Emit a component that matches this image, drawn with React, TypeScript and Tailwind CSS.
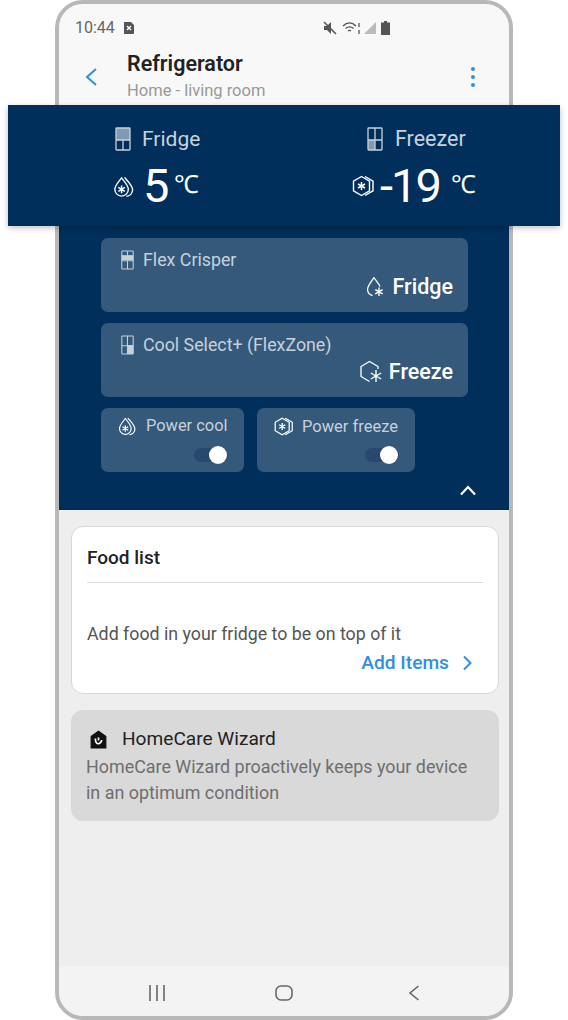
import { FC } from 'react';

const FONT = "font-['Roboto',sans-serif]";

type FridgeIconProps = {
  variant: 'top' | 'bottomRight' | 'topBand' | 'midRight';
  className?: string;
}

const FridgeIcon: FC<FridgeIconProps> = ({ variant, className }) => (
  <svg viewBox="0 0 16 24" className={className} fill="none" stroke="currentColor" strokeWidth="1.3">
    {variant === 'top' && <rect x="1" y="1" width="14" height="12" fill="currentColor" stroke="none" opacity="0.65" />}
    {variant === 'topBand' && <rect x="1" y="6" width="14" height="6" fill="currentColor" stroke="none" />}
    {variant === 'bottomRight' && <rect x="1" y="13" width="7" height="10" fill="currentColor" stroke="none" opacity="0.65" />}
    {variant === 'midRight' && <rect x="8" y="12" width="7" height="11" fill="currentColor" stroke="none" />}
    <rect x="1" y="1" width="14" height="22" rx="0.8" />
    {variant === 'top' || variant === 'topBand' ? (
      <path d="M1 13h14M8 13v10" />
    ) : (
      <path d="M8 1v22M1 13h14" />
    )}
    {variant === 'topBand' && <path d="M8 1v5" />}
  </svg>
);

const Drops: FC<{ className?: string }> = ({ className }) => (
  <svg viewBox="0 0 24 24" className={className} fill="none" stroke="currentColor" strokeWidth="1.4">
    <path d="M10 3c3 4 7 8 7 12a7 7 0 0 1-14 0c0-4 4-8 7-12z" />
    <path d="M13 2.5c4 4.500 8.500 9 8.500 13a6.800 6.800 0 0 1-6.500 6.800" />
    <path d="M10 11v8M6.600 13l6.800 4M13.400 13l-6.800 4" strokeWidth="1.5" />
  </svg>
);

const Hexes: FC<{ className?: string }> = ({ className }) => (
  <svg viewBox="0 0 24 24" className={className} fill="none" stroke="currentColor" strokeWidth="1.4">
    <path d="M10.500 2.500l8 4.700v9.600l-8 4.700-8-4.700V7.200z" />
    <path d="M14 2.500l8 4.700v9.600l-8 4.700" />
    <path d="M10.500 8v8M7 10l7 4M14 10l-7 4" strokeWidth="1.5" />
  </svg>
);

const DropSnow: FC<{ className?: string }> = ({ className }) => (
  <svg viewBox="0 0 20 22" className={className} fill="none" stroke="currentColor" strokeWidth="1.3">
    <path d="M9 1.500C11 5 14 7.500 15 10.500M7.500 19.500A6.500 6.500 0 0 1 2.500 13.500C2.500 9.500 6.500 5.500 9 1.500" />
    <path d="M14 11.500v8.500M10.300 13.700l7.400 4.200M17.700 13.700l-7.400 4.200" strokeWidth="1.4" />
  </svg>
);

const HexSnow: FC<{ className?: string }> = ({ className }) => (
  <svg viewBox="0 0 24 24" className={className} fill="none" stroke="currentColor" strokeWidth="1.3">
    <path d="M19 9V6.500L10.500 1.500 2 6.500v10l8.500 5" />
    <path d="M17 10v12M11.800 13l10.400 6M22.200 13l-10.400 6" strokeWidth="1.4" />
  </svg>
);

const Toggle: FC = () => (
  <div className="relative h-[14px] w-[34px] rounded-full bg-[#29486e]">
    <span className="absolute -top-[2px] right-[1px] h-[18px] w-[18px] rounded-full bg-white" />
  </div>
);

const App: FC = () => {
  return (
    <div className={`${FONT} relative h-[1020px] w-[568px] overflow-hidden bg-white`}>
      <div className="ml-[55px] flex h-[1020px] w-[458px] flex-col overflow-hidden rounded-[28px] border-[4px] border-[#b8b8b8] bg-[#eeeeee]">
        <div className="h-[101px] bg-[#f8f8f8] px-[16px]">
          <div className="flex h-[40px] items-center justify-between pt-[8px]">
            <div className="flex items-center gap-[8px] text-[#666]">
              <span className="text-[16px]">10:44</span>
              <svg viewBox="0 0 12 12" className="h-[12px] w-[12px]">
                <path d="M1 0h7l3 3v8a1 1 0 0 1-1 1H1z" fill="#555" />
                <path d="M4 4l4 4M8 4l-4 4" stroke="#fff" strokeWidth="1.4" />
              </svg>
            </div>
            <div className="mr-[103px] flex items-center gap-[5px] text-[#555]">
              <svg viewBox="0 0 14 14" className="h-[14px] w-[14px]" fill="currentColor">
                <path d="M1 5h3l4-4v12l-4-4H1z" />
                <path d="M1 1l12 12" stroke="currentColor" strokeWidth="1.6" />
              </svg>
              <svg viewBox="0 0 20 14" className="h-[14px] w-[20px]" fill="none" stroke="currentColor" strokeWidth="1.3">
                <path d="M1 5c4-4 9-4 13 0M3.500 7.500c3-2.500 5-2.500 8 0M6 10c1.500-1 2-1 3 0" />
                <path d="M17 2v4M17 9v4" />
              </svg>
              <svg viewBox="0 0 12 12" className="-ml-[3px] h-[12px] w-[12px]">
                <path d="M12 0v12H0z" fill="#bbb" />
              </svg>
              <svg viewBox="0 0 9 14" className="h-[14px] w-[9px]" fill="currentColor">
                <path d="M3 0h3v1.500h3V14H0V1.500h3z" />
              </svg>
            </div>
          </div>
          <div className="mt-[8px] flex items-center">
            <svg viewBox="0 0 14 20" className="ml-[9px] h-[20px] w-[14px]" fill="none" stroke="#2f8fe0" strokeWidth="2">
              <path d="M12 2L3 10l9 8" />
            </svg>
            <div className="ml-[29px] flex-1">
              <div className="text-[21.500px] font-semibold leading-[24px] text-[#222]">Refrigerator</div>
              <div className="mt-[5px] text-[16.500px] leading-[20px] text-[#999]">Home - living room</div>
            </div>
            <div className="mr-[18px] mt-[1px] flex flex-col gap-[3.500px]">
              <span className="h-[4.500px] w-[4.500px] rounded-full bg-[#2f8fe0]" />
              <span className="h-[4.500px] w-[4.500px] rounded-full bg-[#2f8fe0]" />
              <span className="h-[4.500px] w-[4.500px] rounded-full bg-[#2f8fe0]" />
            </div>
          </div>
        </div>

        <div className="h-[405px] bg-[#002f5c] pl-[42px] pt-[133px]">
          <div className="flex h-[74px] w-[367px] flex-col justify-between rounded-[7px] bg-[#34597b] pb-[13px] pl-[20px] pr-[15px] pt-[11px]">
            <div className="flex items-center gap-[9px] text-[#c8d1da]">
              <FridgeIcon variant="topBand" className="h-[20px] w-[13px]" />
              <span className="text-[17.800px] leading-[22px]">Flex Crisper</span>
            </div>
            <div className="flex items-center justify-end gap-[8px] text-white">
              <DropSnow className="h-[22px] w-[20px]" />
              <span className="text-[21.500px] font-medium leading-[24px]">Fridge</span>
            </div>
          </div>
          <div className="mt-[11px] flex h-[74px] w-[367px] flex-col justify-between rounded-[7px] bg-[#34597b] pb-[13px] pl-[20px] pr-[15px] pt-[11px]">
            <div className="flex items-center gap-[9px] text-[#c8d1da]">
              <FridgeIcon variant="midRight" className="h-[20px] w-[13px]" />
              <span className="text-[17.800px] leading-[22px]">Cool Select+ (FlexZone)</span>
            </div>
            <div className="flex items-center justify-end gap-[6px] text-white">
              <HexSnow className="h-[24px] w-[24px]" />
              <span className="text-[21.500px] font-medium leading-[24px]">Freeze</span>
            </div>
          </div>
          <div className="mt-[11px] flex gap-[13px]">
            <div className="flex h-[64px] w-[143px] flex-col justify-between rounded-[7px] bg-[#34597b] px-[16px] pb-[10px] pt-[8px]">
              <div className="flex items-center gap-[9px] text-[#c8d1da]">
                <Drops className="h-[20px] w-[20px] text-white" />
                <span className="whitespace-nowrap text-[16.400px] leading-[20px]">Power cool</span>
              </div>
              <div className="flex justify-end"><Toggle /></div>
            </div>
            <div className="flex h-[64px] w-[158px] flex-col justify-between rounded-[7px] bg-[#34597b] pb-[10px] pl-[16px] pr-[16px] pt-[8px]">
              <div className="flex items-center gap-[8px] text-[#c8d1da]">
                <Hexes className="h-[21px] w-[21px] shrink-0 text-white" />
                <span className="whitespace-nowrap text-[16.500px] leading-[20px]">Power freeze</span>
              </div>
              <div className="flex justify-end"><Toggle /></div>
            </div>
          </div>
          <div className="mr-[32px] mt-[12px] flex justify-end">
            <svg viewBox="0 0 18 12" className="h-[12px] w-[18px]" fill="none" stroke="#fff" strokeWidth="2.200">
              <path d="M2 10.500L9 3l7 7.500" />
            </svg>
          </div>
        </div>

        <div className="flex flex-1 flex-col pl-[12px] pr-[10px] pt-[16px]">
          <div className="h-[168px] rounded-[12px] border border-[#d8d8d8] bg-white px-[15px]">
            <div className="border-b border-[#dcdcdc] pb-[14px] pt-[20px] text-[19px] font-medium leading-[21px] text-[#222]">Food list</div>
            <div className="mt-[41px] text-[17.800px] leading-[20px] text-[#555]">Add food in your fridge to be on top of it</div>
            <div className="mt-[8px] flex items-center justify-end gap-[13px] pr-[11px]">
              <span className="text-[19.200px] font-medium leading-[22px] text-[#2f8fe0]">Add Items</span>
              <svg viewBox="0 0 10 16" className="h-[16px] w-[10px]" fill="none" stroke="#2f8fe0" strokeWidth="2">
                <path d="M2 1.500L8.500 8 2 14.500" />
              </svg>
            </div>
          </div>
          <div className="mt-[16px] h-[111px] rounded-[12px] bg-[#d9d9d9] px-[15px] pt-[17px]">
            <div className="flex items-center gap-[14px]">
              <svg viewBox="0 0 18 18" className="ml-[3px] h-[19px] w-[19px]">
                <path d="M9 1l7 5v11H2V6z" fill="#111" stroke="#111" strokeWidth="1" strokeLinejoin="round" />
                <path d="M6 8c0 4 2 5 3 5s3-1.500 3-3.500M9 7v3" fill="none" stroke="#fff" strokeWidth="1.600" />
              </svg>
              <span className="text-[19.100px] leading-[24px] text-[#222]">HomeCare Wizard</span>
            </div>
            <p className="mt-[3px] pr-[10px] text-[17.900px] leading-[25.500px] text-[#6e6e6e]">
              HomeCare Wizard proactively keeps your device in an optimum condition
            </p>
          </div>
          <div className="flex-1" />
        </div>

        <div className="flex h-[50px] items-center justify-between bg-[#f3f3f3] px-[89px] pt-[4px]">
          <svg viewBox="0 0 18 16" className="h-[16px] w-[18px]" fill="none" stroke="#666" strokeWidth="1.600">
            <path d="M2 0v16M9 0v16M16 0v16" />
          </svg>
          <svg viewBox="0 0 18 16" className="-ml-[6px] h-[16px] w-[18px]" fill="none" stroke="#666" strokeWidth="1.600">
            <rect x="1" y="1" width="16" height="14" rx="5" />
          </svg>
          <svg viewBox="0 0 12 16" className="h-[16px] w-[12px]" fill="none" stroke="#666" strokeWidth="1.600">
            <path d="M10.500 1L2 8l8.500 7" />
          </svg>
        </div>
      </div>

      {/* temperature band sticks out past the phone frame */}
      <div className="absolute left-[8px] top-[105px] flex h-[121px] w-[552px] bg-[#002f5c] text-white shadow-[0_2px_6px_rgba(0,0,0,0.25)]">
        <div className="w-[276px] pl-[107px] pt-[21px]">
          <div className="flex items-center gap-[11px] text-[#c8d2dc]">
            <FridgeIcon variant="top" className="h-[24px] w-[16px]" />
            <span className="text-[21px] leading-[26px]">Fridge</span>
          </div>
          <div className="mt-[6px] flex items-center">
            <Drops className="-ml-[3px] h-[23px] w-[23px]" />
            <span className="ml-[8px] text-[47px] leading-[56px]">5</span>
            <span className="mb-[3px] ml-[5px] text-[25px] leading-[30px]">℃</span>
          </div>
        </div>
        <div className="w-[276px] pl-[67px] pt-[21px]">
          <div className="ml-[16px] flex items-center gap-[12px] text-[#c8d2dc]">
            <FridgeIcon variant="bottomRight" className="h-[24px] w-[16px]" />
            <span className="text-[21.500px] leading-[26px]">Freezer</span>
          </div>
          <div className="mt-[6px] flex items-center">
            <Hexes className="h-[24px] w-[24px]" />
            <span className="ml-[5px] text-[47px] leading-[56px] tracking-[-2px]">-19</span>
            <span className="mb-[3px] ml-[11px] text-[25px] leading-[30px]">℃</span>
          </div>
        </div>
      </div>
    </div>
  );
}

export default App
